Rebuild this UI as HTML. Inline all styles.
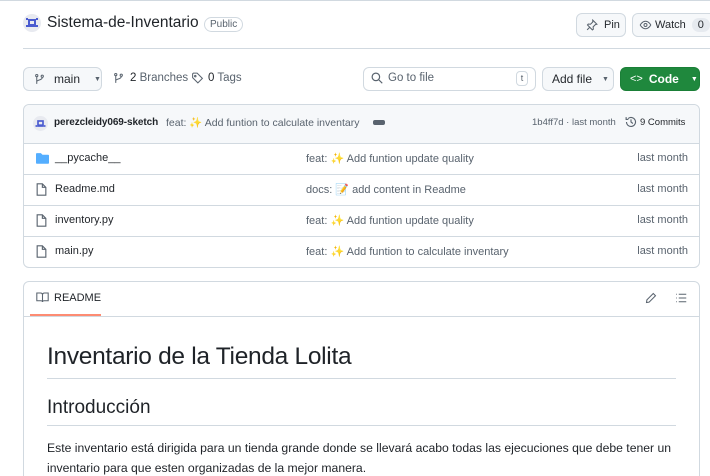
<!DOCTYPE html>
<html><head><meta charset="utf-8"><style>
*{box-sizing:border-box;margin:0;padding:0}
html,body{width:710px;height:476px;overflow:hidden}
body{background:#fff;font-family:"Liberation Sans",sans-serif;color:#1f2328;position:relative;font-size:12px}
.a{position:absolute;white-space:nowrap}
.btn{position:absolute;border:1px solid #d1d9e0;border-radius:6px;background:#f6f8fa;height:24px;display:flex;align-items:center;font-size:11px;color:#25292e}
.row{position:absolute;left:23px;width:677px;height:31px;border-top:1px solid #d1d9e0}
.row .n{position:absolute;left:32px;top:8px;font-size:11px}
.row .m{position:absolute;left:283px;top:8px;font-size:11px;color:#59636e}
.row .t{position:absolute;right:12px;top:8px;font-size:11px;color:#59636e}
.fi{position:absolute;left:13px;top:8px}
svg{display:block}
</style></head><body>
<div class="a" style="left:0;top:0;width:710px;height:1px;background:#d1d9e0"></div>
<svg class="a" style="left:23px;top:14px" width="18" height="18" viewBox="0 0 18 18"><circle cx="9" cy="9" r="9" fill="#e8eaf0"/><rect x="5" y="5" width="8" height="8" fill="#4a5bd0"/><rect x="7" y="7" width="4" height="3" fill="#e8eaf0"/><rect x="3" y="11" width="2" height="2" fill="#4a5bd0"/><rect x="13" y="11" width="2" height="2" fill="#4a5bd0"/><rect x="3" y="4" width="2" height="2" fill="#4a5bd0"/><rect x="13" y="4" width="2" height="2" fill="#4a5bd0"/></svg>
<div class="a" style="left:47px;top:14px;font-size:15.5px">Sistema-de-Inventario</div>
<div class="a" style="left:204px;top:17px;border:1px solid #d1d9e0;border-radius:9px;font-size:10px;padding:1px 5px;color:#59636e">Public</div>
<div class="btn" style="left:576px;top:13px;width:50px;padding-left:9px"><svg width="12" height="12" viewBox="0 0 16 16" fill="none" stroke="#59636e" stroke-width="1.4"><path d="M9 1.5l5.5 5.5-2 .5-3 3 .3 3-1.3 1L2 8l1-1.3 3 .3 3-3z M5 11l-3.5 3.5"/></svg><span style="margin-left:6px">Pin</span></div>
<div class="btn" style="left:632px;top:13px;width:90px;padding-left:6px"><svg width="13" height="12" viewBox="0 0 16 16" fill="none" stroke="#59636e" stroke-width="1.3"><path d="M1 8s2.5-5 7-5 7 5 7 5-2.5 5-7 5-7-5-7-5z"/><circle cx="8" cy="8" r="2"/></svg><span style="margin-left:3px">Watch</span><span style="margin-left:6px;background:#e6eaef;border-radius:8px;padding:1px 6px">0</span></div>
<div class="a" style="left:23px;top:48px;width:687px;height:1px;background:#d1d9e0"></div>

<div class="btn" style="left:23px;top:67px;width:79px;padding-left:10px"><svg width="11" height="12" viewBox="0 0 16 16" fill="none" stroke="#59636e" stroke-width="1.5"><circle cx="4" cy="3" r="1.6"/><circle cx="12" cy="4" r="1.6"/><path d="M4 5v10M12 6c0 4-8 3-8 6"/></svg><span style="margin-left:9px;font-size:12px">main</span><span style="margin-left:14px;font-size:7px;color:#59636e">▼</span></div>
<svg class="a" style="left:113px;top:72px" width="11" height="12" viewBox="0 0 16 16" fill="none" stroke="#59636e" stroke-width="1.5"><circle cx="4" cy="3" r="1.6"/><circle cx="12" cy="4" r="1.6"/><path d="M4 5v10M12 6c0 4-8 3-8 6"/></svg>
<div class="a" style="left:130px;top:72px;font-size:11.5px;color:#59636e"><span style="color:#1f2328">2</span> Branches</div>
<svg class="a" style="left:191px;top:72px" width="13" height="12" viewBox="0 0 16 16" fill="none" stroke="#59636e" stroke-width="1.4"><path d="M1.5 2.5v5l7 7 6-6-7-7h-5z"/><circle cx="5" cy="5.5" r="1"/></svg>
<div class="a" style="left:208px;top:72px;font-size:11.5px;color:#59636e"><span style="color:#1f2328">0</span> Tags</div>

<div class="a" style="left:363px;top:67px;width:173px;height:24px;border:1px solid #d1d9e0;border-radius:6px"></div>
<svg class="a" style="left:371px;top:72px" width="12" height="12" viewBox="0 0 16 16" fill="none" stroke="#59636e" stroke-width="1.6"><circle cx="6.5" cy="6.5" r="5"/><path d="M10.5 10.5L15 15"/></svg>
<div class="a" style="left:388px;top:72px;font-size:11.5px;color:#59636e">Go to file</div>
<div class="a" style="left:516px;top:71px;width:12px;height:15px;border:1px solid #d1d9e0;border-radius:4px;font-size:9px;text-align:center;line-height:13px;color:#59636e">t</div>
<div class="btn" style="left:542px;top:67px;width:72px;padding-left:9px;font-size:12px">Add file<span style="margin-left:10px;font-size:7px;color:#59636e">▼</span></div>
<div class="btn" style="left:620px;top:67px;width:80px;padding-left:9px;background:#1f883d;border-color:#1a7f37;color:#fff;font-size:12px"><span style="font-size:11px">&lt;&gt;</span><span style="margin-left:6px;font-weight:bold">Code</span><span style="margin-left:12px;font-size:7px">▼</span></div>

<div class="a" style="left:23px;top:104px;width:677px;height:164px;border:1px solid #d1d9e0;border-radius:6px"></div>
<div class="a" style="left:24px;top:105px;width:675px;height:38px;background:#f6f8fa;border-radius:6px 6px 0 0"></div>
<svg class="a" style="left:33px;top:116px" width="15" height="15" viewBox="0 0 18 18"><circle cx="9" cy="9" r="9" fill="#e8eaf0"/><rect x="5" y="5" width="8" height="8" fill="#4a5bd0"/><rect x="7" y="7" width="4" height="3" fill="#e8eaf0"/><rect x="3" y="11" width="2" height="2" fill="#4a5bd0"/><rect x="13" y="11" width="2" height="2" fill="#4a5bd0"/></svg>
<div class="a" style="left:54px;top:117px;font-size:10px;letter-spacing:-0.1px"><b>perezcleidy069-sketch</b></div>
<div class="a" style="left:166px;top:116px;font-size:10.5px;color:#59636e">feat: <span style="color:#f5a23c">✨</span> Add funtion to calculate inventary</div>
<div class="a" style="left:373px;top:120px;width:12px;height:5px;background:#59636e;border-radius:2px"></div>
<div class="a" style="left:532px;top:117px;font-size:9.5px;color:#59636e">1b4ff7d · last month</div>
<svg class="a" style="left:625px;top:116px" width="12" height="12" viewBox="0 0 16 16" fill="none" stroke="#59636e" stroke-width="1.5"><path d="M2 8a6 6 0 1 0 2-4.5M1.5 1.5v3h3M8 4.5V8l2.5 2"/></svg>
<div class="a" style="left:640px;top:117px;font-size:9.5px">9 Commits</div>

<div class="row" style="top:143px"><svg class="fi" width="13" height="12" viewBox="0 0 16 14"><path d="M0 2a1 1 0 0 1 1-1h5l2 2h7a1 1 0 0 1 1 1v9a1 1 0 0 1-1 1H1a1 1 0 0 1-1-1z" fill="#54aeff"/></svg><span class="n">__pycache__</span><span class="m">feat: <span style="color:#f5a23c">✨</span> Add funtion update quality</span><span class="t">last month</span></div>
<div class="row" style="top:174px"><svg class="fi" width="11" height="13" viewBox="0 0 12 15" fill="none" stroke="#59636e" stroke-width="1.3"><path d="M1 1h6l4 4v9H1z M7 1v4h4"/></svg><span class="n">Readme.md</span><span class="m">docs: <span style="color:#c96">📝</span> add content in Readme</span><span class="t">last month</span></div>
<div class="row" style="top:205px"><svg class="fi" width="11" height="13" viewBox="0 0 12 15" fill="none" stroke="#59636e" stroke-width="1.3"><path d="M1 1h6l4 4v9H1z M7 1v4h4"/></svg><span class="n">inventory.py</span><span class="m">feat: <span style="color:#f5a23c">✨</span> Add funtion update quality</span><span class="t">last month</span></div>
<div class="row" style="top:236px"><svg class="fi" width="11" height="13" viewBox="0 0 12 15" fill="none" stroke="#59636e" stroke-width="1.3"><path d="M1 1h6l4 4v9H1z M7 1v4h4"/></svg><span class="n">main.py</span><span class="m">feat: <span style="color:#f5a23c">✨</span> Add funtion to calculate inventary</span><span class="t">last month</span></div>

<div class="a" style="left:23px;top:281px;width:677px;height:210px;border:1px solid #d1d9e0;border-radius:6px"></div>
<div class="a" style="left:24px;top:316px;width:675px;height:1px;background:#d1d9e0"></div>
<svg class="a" style="left:36px;top:292px" width="13" height="11" viewBox="0 0 16 13" fill="none" stroke="#59636e" stroke-width="1.3"><path d="M1 1h4.5C7 1 8 2 8 3.5V12C8 11 7 10.5 6 10.5H1z M15 1h-4.5C9 1 8 2 8 3.5V12c0-1 1-1.5 2-1.5H15z"/></svg>
<div class="a" style="left:54px;top:292px;font-size:11px">README</div>
<div class="a" style="left:30px;top:314px;width:71px;height:2px;background:#fd8c73"></div>
<svg class="a" style="left:645px;top:292px" width="12" height="12" viewBox="0 0 16 16" fill="none" stroke="#59636e" stroke-width="1.4"><path d="M11 2l3 3-8.5 8.5L2 14l.5-3.5z"/></svg>
<svg class="a" style="left:675px;top:292px" width="12" height="12" viewBox="0 0 16 16" fill="none" stroke="#59636e" stroke-width="1.4"><path d="M5 3h10M5 8h10M5 13h10M1.5 3h1M1.5 8h1M1.5 13h1"/></svg>

<div class="a" style="left:47px;top:343px;font-size:24.5px;letter-spacing:-0.3px">Inventario de la Tienda Lolita</div>
<div class="a" style="left:47px;top:378px;width:629px;height:1px;background:#d1d9e0"></div>
<div class="a" style="left:47px;top:397px;font-size:19px">Introducción</div>
<div class="a" style="left:47px;top:425px;width:629px;height:1px;background:#d1d9e0"></div>
<div class="a" style="left:47px;top:438px;font-size:12.2px;line-height:20px">Este inventario está dirigida para un tienda grande donde se llevará acabo todas las ejecuciones que debe tener un<br>inventario para que esten organizadas de la mejor manera.</div>
</body></html>
